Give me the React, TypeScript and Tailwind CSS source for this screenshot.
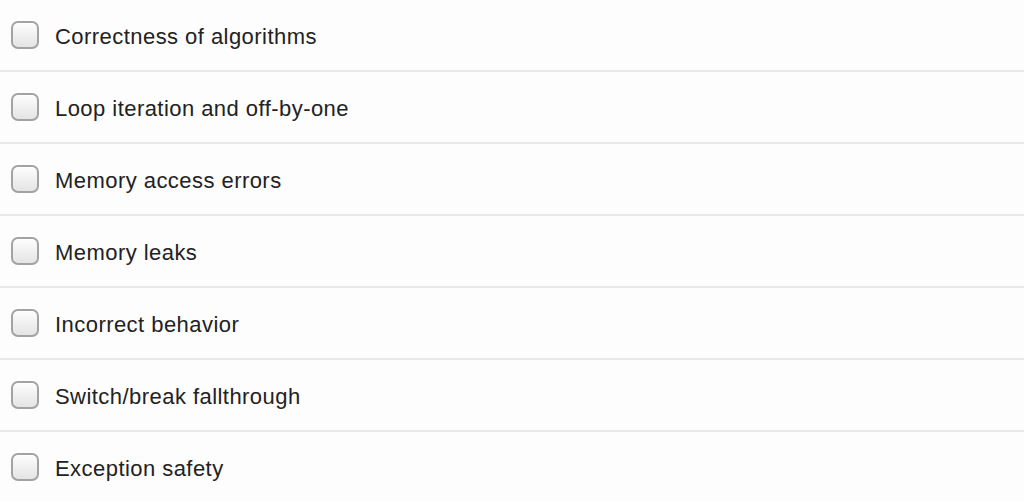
const items = [
  "Correctness of algorithms",
  "Loop iteration and off-by-one",
  "Memory access errors",
  "Memory leaks",
  "Incorrect behavior",
  "Switch/break fallthrough",
  "Exception safety",
];

export default function App() {
  return (
    <div className="w-full bg-[#fdfdfd] font-['Liberation_Sans',Arial,sans-serif]">
      {items.map((label, i) => (
        <label
          key={i}
          className="flex h-[72px] items-center border-b-2 border-[#e8e8e8] pl-[11px]"
        >
          <span className="h-[28px] w-[28px] shrink-0 rounded-[7px] border-2 border-[#a3a3a3] bg-gradient-to-b from-[#fdfdfd] to-[#e4e4e4] shadow-[inset_0_1px_0_#fff]" />
          <span className="ml-[16px] pt-[2px] text-[22px] tracking-[0.45px] text-[#222]">{label}</span>
        </label>
      ))}
    </div>
  );
}
